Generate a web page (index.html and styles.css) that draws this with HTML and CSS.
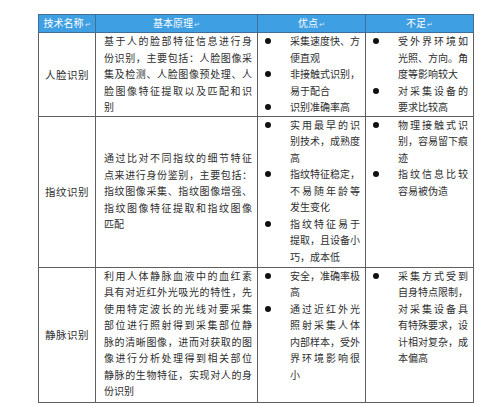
FILE: index.html
```html
<!DOCTYPE html>
<html lang="zh">
<head>
<meta charset="utf-8">
<title>生物识别技术对比</title>
<link rel="stylesheet" href="styles.css">
</head>
<body>
<table class="cmp">
  <colgroup>
    <col class="c1"><col class="c2"><col class="c3"><col class="c4">
  </colgroup>
  <thead>
    <tr class="hd">
      <th>技术名称<span class="pm">↵</span></th>
      <th>基本原理<span class="pm">↵</span></th>
      <th>优点<span class="pm">↵</span></th>
      <th>不足<span class="pm">↵</span></th>
    </tr>
  </thead>
  <tbody>
    <tr class="r1">
      <td class="name">人脸识别</td>
      <td class="desc top">
        <span class="ln">基于人的脸部特征信息进行身</span>
        <span class="ln">份识别，主要包括：人脸图像采</span>
        <span class="ln">集及检测、人脸图像预处理、人</span>
        <span class="ln">脸图像特征提取以及匹配和识</span>
        <span class="ln end">别</span>
      </td>
      <td class="list">
        <div class="item"><span class="dot"><i></i></span><div class="txt"><span class="ln">采集速度快、方</span><span class="ln end">便直观</span></div></div>
        <div class="item"><span class="dot"><i></i></span><div class="txt"><span class="ln">非接触式识别，</span><span class="ln end">易于配合</span></div></div>
        <div class="item"><span class="dot"><i></i></span><div class="txt"><span class="ln end">识别准确率高</span></div></div>
      </td>
      <td class="list">
        <div class="item"><span class="dot"><i></i></span><div class="txt"><span class="ln">受外界环境如</span><span class="ln">光照、方向。角</span><span class="ln end">度等影响较大</span></div></div>
        <div class="item"><span class="dot"><i></i></span><div class="txt"><span class="ln">对采集设备的</span><span class="ln end">要求比较高</span></div></div>
      </td>
    </tr>
    <tr class="r2">
      <td class="name">指纹识别</td>
      <td class="desc">
        <span class="ln">通过比对不同指纹的细节特征</span>
        <span class="ln">点来进行身份鉴别，主要包括：</span>
        <span class="ln">指纹图像采集、指纹图像增强、</span>
        <span class="ln">指纹图像特征提取和指纹图像</span>
        <span class="ln end">匹配</span>
      </td>
      <td class="list">
        <div class="item"><span class="dot"><i></i></span><div class="txt"><span class="ln">实用最早的识</span><span class="ln">别技术，成熟度</span><span class="ln end">高</span></div></div>
        <div class="item"><span class="dot"><i></i></span><div class="txt"><span class="ln">指纹特征稳定，</span><span class="ln">不易随年龄等</span><span class="ln end">发生变化</span></div></div>
        <div class="item"><span class="dot"><i></i></span><div class="txt"><span class="ln">指纹特征易于</span><span class="ln">提取，且设备小</span><span class="ln end">巧，成本低</span></div></div>
      </td>
      <td class="list">
        <div class="item"><span class="dot"><i></i></span><div class="txt"><span class="ln">物理接触式识</span><span class="ln">别，容易留下痕</span><span class="ln end">迹</span></div></div>
        <div class="item"><span class="dot"><i></i></span><div class="txt"><span class="ln">指纹信息比较</span><span class="ln end">容易被伪造</span></div></div>
      </td>
    </tr>
    <tr class="r3">
      <td class="name">静脉识别</td>
      <td class="desc top">
        <span class="ln">利用人体静脉血液中的血红素</span>
        <span class="ln">具有对近红外光吸光的特性，先</span>
        <span class="ln">使用特定波长的光线对要采集</span>
        <span class="ln">部位进行照射得到采集部位静</span>
        <span class="ln">脉的清晰图像，进而对获取的图</span>
        <span class="ln">像进行分析处理得到相关部位</span>
        <span class="ln">静脉的生物特征，实现对人的身</span>
        <span class="ln end">份识别</span>
      </td>
      <td class="list">
        <div class="item"><span class="dot"><i></i></span><div class="txt"><span class="ln">安全，准确率极</span><span class="ln end">高</span></div></div>
        <div class="item"><span class="dot"><i></i></span><div class="txt"><span class="ln">通过近红外光</span><span class="ln">照射采集人体</span><span class="ln">内部样本，受外</span><span class="ln">界环境影响很</span><span class="ln end">小</span></div></div>
      </td>
      <td class="list">
        <div class="item"><span class="dot"><i></i></span><div class="txt"><span class="ln">采集方式受到</span><span class="ln">自身特点限制，</span><span class="ln">对采集设备具</span><span class="ln">有特殊要求，设</span><span class="ln">计相对复杂，成</span><span class="ln end">本偏高</span></div></div>
      </td>
    </tr>
  </tbody>
</table>
</body>
</html>
```

FILE: styles.css
```css
html, body {
  margin: 0;
  padding: 0;
  background: #ffffff;
}

body {
  font-family: "Noto Sans CJK SC", "Noto Sans", sans-serif;
  color: #2e2e2e;
  font-size: 10px;
}

.cmp {
  border-collapse: collapse;
  table-layout: fixed;
  width: 435px;
  margin: 14px 0 0 38px;
}

.c1 { width: 57px; }
.c2 { width: 162px; }
.c3 { width: 108px; }
.c4 { width: 108px; }

.cmp th,
.cmp td {
  border: 1.5px solid #5f5f5f;
  padding: 0;
}

.hd th {
  height: 16px;
  background: #3f9fe3;
  color: #ffffff;
  font-weight: normal;
  font-size: 10px;
  line-height: 16px;
  text-align: center;
  border-color: #3f6e96;
}

.pm {
  font-size: 7px;
  opacity: 0.75;
  margin-left: 1px;
}

.r1 { height: 83px; }
.r2 { height: 151px; }
.r3 { height: 135px; }

.name {
  text-align: center;
  vertical-align: middle;
  font-size: 10.5px;
  letter-spacing: 0.5px;
}

.desc {
  vertical-align: middle;
  padding: 0 5px 0 8px !important;
  line-height: 16.5px;
}

.desc.top {
  vertical-align: top;
}

.ln {
  display: block;
  white-space: nowrap;
  text-align: justify;
  text-align-last: justify;
  text-justify: inter-character;
}

.ln.end {
  text-align-last: left;
}

.list {
  vertical-align: top;
  line-height: 16.5px;
}

.item {
  display: flex;
}

.dot {
  flex: none;
  width: 32px;
  height: 16.5px;
  display: flex;
  align-items: center;
  padding-left: 7px;
  box-sizing: border-box;
}

.dot i {
  display: block;
  width: 6px;
  height: 6px;
  border-radius: 50%;
  background: #111111;
}

.txt {
  width: 70px;
}
```
